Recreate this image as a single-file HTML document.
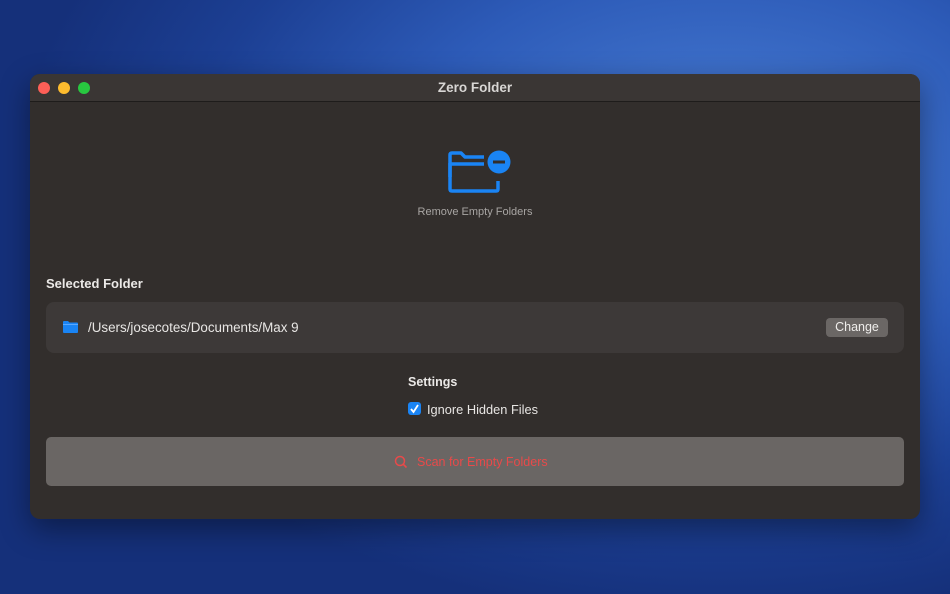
<!DOCTYPE html>
<html><head><style>
*{margin:0;padding:0;box-sizing:border-box}
body{width:950px;height:594px;overflow:hidden;font-family:"Liberation Sans",sans-serif;
background:radial-gradient(ellipse 700px 450px at 720px 170px,#4a7fd6 0%,#2d5bb8 45%,#1c3f93 75%,#15307a 100%);position:relative}
.win{position:absolute;left:30px;top:74px;width:890px;height:445px;border-radius:10px;background:#322e2c;overflow:hidden;box-shadow:0 10px 30px rgba(0,0,0,.4)}
.tb{height:28px;background:#3a3634;border-bottom:1px solid #1e1c1b;text-align:center;color:#d8d6d4;font-weight:bold;font-size:13.5px;line-height:27px}
.dot{position:absolute;top:8px;width:12px;height:12px;border-radius:50%}
.t{position:absolute;color:#fff}
</style></head><body>
<div class="win">
<div class="tb">Zero Folder</div>
<div class="dot" style="left:8px;background:#fe5f57"></div>
<div class="dot" style="left:28px;background:#febc2e"></div>
<div class="dot" style="left:48px;background:#28c840"></div>
<svg style="position:absolute;left:416px;top:75px" width="66" height="48" viewBox="0 0 66 48">
<path d="M4 28 V6 Q4 4 6 4 H15 L19 8 H38" fill="none" stroke="#1a84f4" stroke-width="3.5" stroke-linejoin="round"/>
<path d="M4 15 H38 M4 14 V40 Q4 42 6 42 H50 Q52 42 52 40 V32" fill="none" stroke="#1a84f4" stroke-width="3.5" stroke-linejoin="round"/>
<circle cx="53" cy="13" r="11.5" fill="#1a84f4"/>
<rect x="47" y="11.5" width="12" height="3" fill="#322e2c"/>
</svg>
<div class="t" style="left:0;width:890px;text-align:center;top:132px;font-size:11px;color:#a8a5a3">Remove Empty Folders</div>
<div class="t" style="left:16px;top:202px;font-size:13px;font-weight:bold;color:#ebe9e7">Selected Folder</div>
<div style="position:absolute;left:16px;top:228px;width:858px;height:51px;border-radius:8px;background:#3d3938"></div>
<svg style="position:absolute;left:33px;top:247px" width="15" height="12" viewBox="0 0 15 12"><path d="M0 1 Q0 0 1 0 H5 L6.5 1.5 H14 Q15 1.5 15 2.5 V11 Q15 12 14 12 H1 Q0 12 0 11Z" fill="#1a84f4"/><rect x="0" y="3" width="15" height="1" fill="#5aa8ff"/></svg>
<div class="t" style="left:58px;top:246px;font-size:13.4px;color:#e8e6e4">/Users/josecotes/Documents/Max 9</div>
<div style="position:absolute;left:796px;top:244px;width:62px;height:19px;border-radius:4px;background:#6b6765;color:#efedeb;font-size:12.5px;text-align:center;line-height:19px">Change</div>
<div class="t" style="left:378px;top:301px;font-size:12.5px;font-weight:bold;color:#ebe9e7">Settings</div>
<div style="position:absolute;left:378px;top:328px;width:13px;height:13px;border-radius:3px;background:#1a84f4"></div>
<svg style="position:absolute;left:378px;top:328px" width="13" height="13"><path d="M3 7 L5.5 10 L10 3" fill="none" stroke="#fff" stroke-width="1.8"/></svg>
<div class="t" style="left:397px;top:328px;font-size:12.8px;color:#e8e6e4">Ignore Hidden Files</div>
<div style="position:absolute;left:16px;top:363px;width:858px;height:49px;border-radius:5px;background:#6a6664"></div>
<svg style="position:absolute;left:364px;top:381px" width="14" height="14"><circle cx="6" cy="6" r="4.5" fill="none" stroke="#e84a4a" stroke-width="1.5"/><path d="M9.3 9.3 L12.5 12.5" stroke="#e84a4a" stroke-width="1.6"/></svg>
<div class="t" style="left:387px;top:381px;font-size:12.5px;color:#e84a4a">Scan for Empty Folders</div>
</div>
</body></html>
